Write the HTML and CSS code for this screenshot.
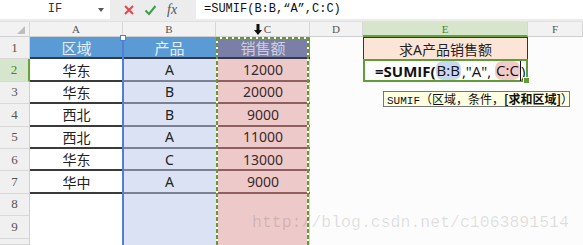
FILE: index.html
```html
<!DOCTYPE html>
<html lang="zh">
<head>
  <meta charset="UTF-8">
  <title>SUMIF</title>
  <link rel="stylesheet" href="styles.css">
</head>
<body>
  <div class="fbar">
    <div class="namebox">IF<span class="caret"></span></div>
    <div class="fbtns">
      <svg width="12" height="12" viewBox="0 0 12 12"><path d="M2 2L10 10M10 2L2 10" stroke="#e2474d" stroke-width="2"/></svg>
      <svg width="13" height="12" viewBox="0 0 13 12"><path d="M1.5 6.5L5 10L11.5 2" stroke="#3aa047" stroke-width="2" fill="none"/></svg>
      <span class="fx">fx</span>
    </div>
    <div class="formula">=SUMIF(B:B,“A”,C:C)</div>
  </div>

  <div class="sheet">
    <div class="corner"><span class="tri"></span></div>
    <div class="colh">A</div>
    <div class="colh">B</div>
    <div class="colh colc"><svg width="8" height="11" viewBox="0 0 8 11"><path d="M2.5 0H5.5V6H8L4 11L0 6H2.5Z" fill="#111"/></svg>C</div>
    <div class="colh">D</div>
    <div class="colh cole">E</div>
    <div class="colh">F</div>

    <div class="rn">1</div>
    <div class="ca hd">区域</div>
    <div class="cb hd">产品</div>
    <div class="cc hd hdc">销售额</div>
    <div class="ce title">求A产品销售额</div>

    <div class="rn rn-act">2</div>
    <div class="ca bl">华东</div>
    <div class="cb bl">A</div>
    <div class="cc bl">12000</div>
    <div class="ce active">
      <span class="fn">=SUMIF(</span><span class="rb">B:B</span>,"A", <span class="rc">C:C</span><span class="cur">)</span>
      <span class="handle"></span>
    </div>

    <div class="rn">3</div>
    <div class="ca bl">华东</div>
    <div class="cb bl">B</div>
    <div class="cc bl">20000</div>

    <div class="rn">4</div>
    <div class="ca bl">西北</div>
    <div class="cb bl">B</div>
    <div class="cc bl">9000</div>

    <div class="rn">5</div>
    <div class="ca bl">西北</div>
    <div class="cb bl">A</div>
    <div class="cc bl">11000</div>

    <div class="rn">6</div>
    <div class="ca bl">华东</div>
    <div class="cb bl">C</div>
    <div class="cc bl">13000</div>

    <div class="rn">7</div>
    <div class="ca bl">华中</div>
    <div class="cb bl">A</div>
    <div class="cc bl">9000</div>

    <div class="rn">8</div>
    <div class="ca"></div>
    <div class="cb"></div>
    <div class="cc"></div>

    <div class="rn">9</div>
    <div class="ca"></div>
    <div class="cb"></div>
    <div class="cc"></div>

    <div class="rn"></div>
    <div class="ca"></div>
    <div class="cb"></div>
    <div class="cc"></div>

    <div class="range-b"><span class="knob"></span></div>
    <div class="range-c"></div>
  </div>

  <div class="tip">SUMIF<span class="cj">（区域，条件，<b>[求和区域]</b>）</span></div>
  <div class="mark">http://blog.csdn.net/c1063891514</div>
</body>
</html>
```

FILE: styles.css
```css
body {
  margin: 0;
  width: 583px;
  height: 245px;
  overflow: hidden;
  position: relative;
  background: #fcfcfc;
  font-family: "Noto Sans", "Noto Sans CJK SC", sans-serif;
}

/* formula bar */
.fbar {
  display: flex;
  height: 22px;
  background: #ececec;
  border-bottom: 1px solid #e0e0e0;
  box-sizing: border-box;
}
.namebox {
  width: 110px;
  height: 19px;
  background: #fff;
  position: relative;
  text-align: center;
  font: 12px/19px "Liberation Mono", monospace;
  color: #333;
}
.caret {
  position: absolute;
  right: 6px;
  top: 8px;
  border-left: 3px solid transparent;
  border-right: 3px solid transparent;
  border-top: 4px solid #555;
}
.fbtns {
  width: 86px;
  display: flex;
  align-items: center;
  gap: 9px;
  padding-left: 13px;
  box-sizing: border-box;
  height: 19px;
}
.fx {
  font: italic 14px "Liberation Serif", serif;
  color: #555;
  margin-left: 1px;
}
.formula {
  flex: 1;
  height: 19px;
  background: #fff;
  font: 12px/19px "Liberation Mono", "Noto Sans CJK SC", monospace;
  color: #111;
  padding-left: 8px;
}

/* grid */
.sheet {
  display: grid;
  position: relative;
  grid-template-columns: 30px 93px 93px 94px 53px 165px 1fr;
  grid-template-rows: 15px repeat(9, 22.4px) 1fr;
  height: 223px;
}
.corner, .colh {
  background: #f2f2f2;
  border-right: 1px solid #d6d6d6;
  border-bottom: 1px solid #cfcfcf;
  box-sizing: border-box;
}
.corner { position: relative; }
.tri {
  position: absolute;
  right: 4px;
  bottom: 2px;
  border-left: 8px solid transparent;
  border-bottom: 8px solid #bdbdbd;
}
.colh {
  font: 11px/14px "Liberation Serif", serif;
  color: #555;
  text-align: center;
}
.colc { display: flex; justify-content: center; align-items: center; gap: 2px; }
.cole {
  background: #d6e5cc;
  color: #3f8a2a;
  border-bottom: 2px solid #66a33d;
}
.rn {
  grid-column: 1;
  background: #f0f0f0;
  border-bottom: 1px solid #d8d8d8;
  border-right: 1px solid #d0d0d0;
  box-sizing: border-box;
  font: 13px "Liberation Serif", serif;
  color: #555;
  display: flex;
  align-items: center;
  justify-content: center;
}
.rn-act {
  background: #d6e6cc;
  color: #3f8a2a;
  border-right: 2px solid #66a33d;
}
.ca, .cb, .cc, .ce {
  display: flex;
  align-items: center;
  justify-content: center;
  box-sizing: border-box;
  font-size: 14px;
  color: #222;
}
.ca { grid-column: 2; background: #fff; }
.cb { grid-column: 3; background: #dbe2f3; }
.cc { grid-column: 4; background: #eec9c9; color: #3a2a2a; }
.ce { grid-column: 6; }
.hd {
  background: #5b9bd5;
  color: #e6eef8;
  font-size: 15px;
  border-bottom: 2px solid #303a4a;
}
.hdc { background: #7b7fa7; color: #cfd0de; }
.ca.bl { border-bottom: 2px solid #3a3a3a; }
.cb.bl { border-bottom: 2px solid #7b8192; }
.cc.bl { border-bottom: 2px solid #8d5f5f; }

.title {
  background: #fce4d6;
  border: 1px solid #333;
  border-bottom: none;
  font-size: 14px;
}
.active {
  border: 2px solid #5f9e37;
  background: #fff;
  position: relative;
  justify-content: flex-start;
  padding-left: 10px;
  font-family: "Open Sans", "Noto Sans", sans-serif;
  font-size: 15px;
  color: #111;
  white-space: pre;
}
.fn { font-weight: bold; }
.rb, .rc {
  border-radius: 7px;
  padding: 0 1px;
  line-height: 19px;
}
.rb { background: #c9d7ef; margin-right: 1px; }
.rc { background: #f1caca; }
.cur { border-left: 1px solid #111; }
.handle {
  position: absolute;
  right: -4px;
  bottom: -4px;
  width: 5px;
  height: 5px;
  background: #5f9e37;
  border: 1px solid #fff;
}

/* selected ranges, drawn over the cells */
.range-b, .range-c {
  position: absolute;
  grid-row: 2 / 12;
  top: 0;
  bottom: 0;
  left: 0;
  right: 0;
}
.range-b {
  grid-column: 3 / 4;
  left: -1px;
  border-left: 2px solid #4f7fd8;
}
.knob {
  position: absolute;
  left: -4px;
  top: -2px;
  width: 4px;
  height: 4px;
  background: #fff;
  border: 1px solid #4f7fd8;
}
.range-c {
  grid-column: 4 / 5;
  right: 1px;
  background:
    repeating-linear-gradient(to bottom, #679a2e 0 4px, #fff 4px 6px) left top / 2px 100% no-repeat,
    repeating-linear-gradient(to bottom, #679a2e 0 4px, #fff 4px 6px) right top / 2px 100% no-repeat,
    repeating-linear-gradient(to right, #679a2e 0 4px, #fff 4px 6px) left top / 100% 2px no-repeat;
}

/* overlays */
.tip {
  position: absolute;
  left: 383px;
  top: 91px;
  width: 187px;
  height: 16px;
  box-sizing: border-box;
  background: #ffffe1;
  border: 1px solid #767676;
  font: 11px/14px "Liberation Mono", monospace;
  color: #111;
  padding-left: 3px;
  white-space: nowrap;
}
.tip .cj {
  font: 12px/14px "Noto Sans CJK SC", sans-serif;
}
.mark {
  position: absolute;
  left: 252px;
  top: 213px;
  font: 16.5px "Liberation Mono", monospace;
  color: rgba(0, 0, 0, 0.13);
  white-space: nowrap;
}
```
